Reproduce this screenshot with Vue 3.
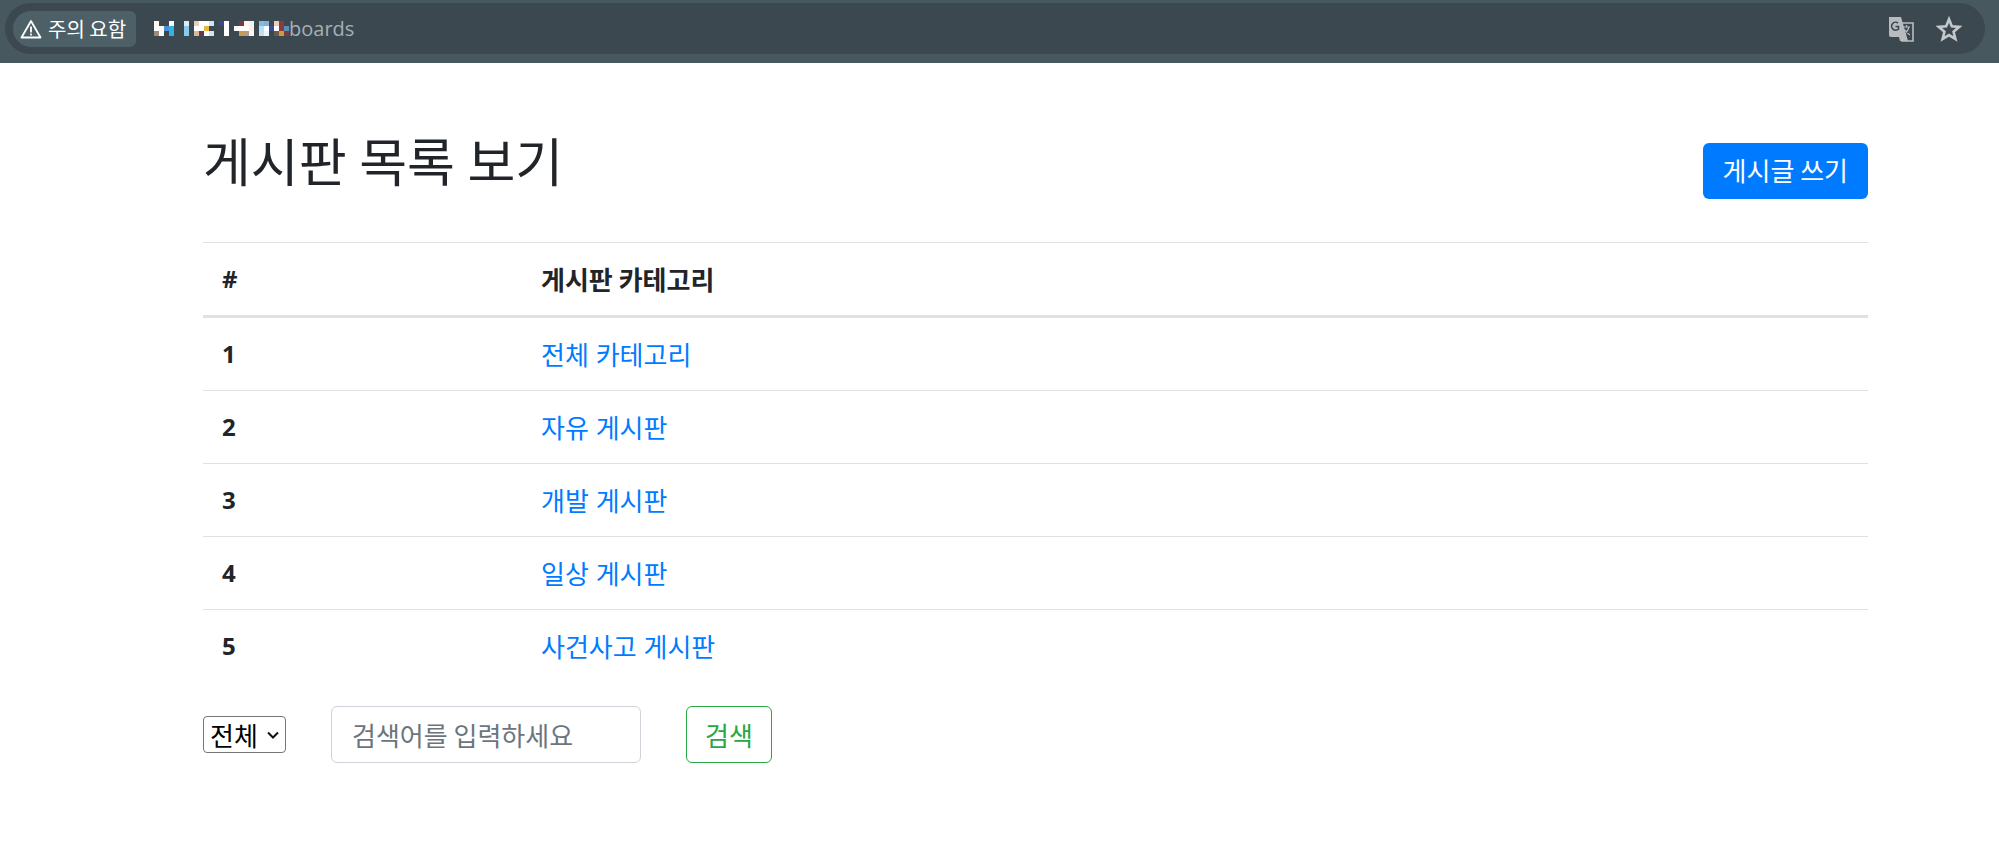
<script setup>
const rows = [
  { id: 1, name: '전체 카테고리' },
  { id: 2, name: '자유 게시판' },
  { id: 3, name: '개발 게시판' },
  { id: 4, name: '일상 게시판' },
  { id: 5, name: '사건사고 게시판' },
]

// pixelated part of the address: [col, row, colour]
const cells = [
  [0, 0, '#fdfbe5'], [0, 1, '#ffffff'], [0, 2, '#a08a7c'], [1, 1, '#fff6ec'], [1, 2, '#ffffff'],
  [2, 1, '#4a90d9'], [3, 0, '#ffffff'], [3, 1, '#35b0e0'], [3, 2, '#35b0e0'],
  [6, 0, '#dfeaf5'], [6, 1, '#8ac8ee'], [6, 2, '#8ac8ee'],
  [8, 0, '#e8cdb8'], [8, 1, '#ffffff'], [8, 2, '#d8b898'], [9, 0, '#ffffff'], [9, 1, '#ffffff'], [9, 2, '#6a3a44'],
  [10, 0, '#ffffff'], [10, 1, '#e8b840'], [10, 2, '#ffffff'], [11, 0, '#c8e8f8'], [11, 2, '#c8e8f8'],
  [13, 0, '#3a4a90'], [14, 0, '#ffffff'], [14, 1, '#ffffff'], [14, 2, '#ffffff'],
  [16, 1, '#ffffff'], [17, 0, '#7a3a40'], [17, 1, '#ffffff'], [17, 2, '#d09a48'],
  [18, 0, '#fff6ec'], [18, 1, '#ffffff'], [18, 2, '#b89a80'], [19, 0, '#e8f4fc'], [19, 1, '#fdf0e0'], [19, 2, '#fdf6ee'],
  [21, 0, '#8ab8e0'], [21, 1, '#aee0ff'], [21, 2, '#c8e0d8'], [22, 0, '#7fb2da'], [22, 1, '#ffffff'], [22, 2, '#e8f4fc'],
  [23, 1, '#3a4a9a'], [24, 0, '#e8cdb8'], [24, 1, '#ffffff'], [24, 2, '#6a5a50'],
  [25, 0, '#8a3a40'], [25, 1, '#8a3a40'], [25, 2, '#d09a40'], [26, 1, '#5a90b0'], [26, 2, '#7a3a40'],
]
</script>

<template>
  <div class="page">
    <header class="chrome">
      <div class="omnibox">
        <div class="warning">
          <svg class="warn-icon" viewBox="0 0 22 20" width="22" height="20">
            <path d="M11 2 L20.5 18.5 H1.5 Z" fill="none" stroke="#fff" stroke-width="1.8" stroke-linejoin="round" />
            <rect x="10.1" y="7.5" width="1.8" height="6" fill="#fff" />
            <rect x="10.1" y="14.6" width="1.8" height="1.8" fill="#fff" />
          </svg>
          <span>주의 요함</span>
        </div>
        <svg class="blur" viewBox="0 0 135 15" width="135" height="15" shape-rendering="crispEdges">
          <rect v-for="(c, i) in cells" :key="i" :x="c[0] * 5" :y="c[1] * 5" width="5" height="5" :fill="c[2]" />
        </svg>
        <span class="path">boards</span>
        <div class="omni-actions">
          <svg viewBox="0 0 26 26" width="26" height="26">
            <path d="M1 1 H13 L20 25 H12 L11 21 H3 Q1 21 1 19 Z" fill="#b8bcbf" />
            <path d="M12 7 H25 V25 H14 Z" fill="none" stroke="#b8bcbf" stroke-width="1.6" />
            <path d="M10 7 A4 4 0 1 0 10.5 13 V10.5 H7.5" fill="none" stroke="#3c4850" stroke-width="1.6" />
            <path d="M15 11 H22 M18.5 9 V11 M21 11 Q19 17 15 19 M16.5 13.5 Q18.5 17 22 19" fill="none" stroke="#b8bcbf" stroke-width="1.2" />
          </svg>
          <svg viewBox="0 0 24 24" width="26" height="26">
            <path d="M12 3 L14.6 9.4 L21.5 10 L16.2 14.5 L17.9 21.2 L12 17.6 L6.1 21.2 L7.8 14.5 L2.5 10 L9.4 9.4 Z" fill="none" stroke="#c4c8ca" stroke-width="2.4" stroke-linejoin="miter" />
          </svg>
        </div>
      </div>
    </header>

    <main class="content">
      <div class="title-row">
        <h1>게시판 목록 보기</h1>
        <a class="btn-write" href="#">게시글 쓰기</a>
      </div>

      <table class="table">
        <thead>
          <tr>
            <th class="col-id">#</th>
            <th>게시판 카테고리</th>
          </tr>
        </thead>
        <tbody>
          <tr v-for="row in rows" :key="row.id">
            <th class="cell-id">{{ row.id }}</th>
            <td><a href="#">{{ row.name }}</a></td>
          </tr>
        </tbody>
      </table>

      <form class="search" @submit.prevent>
        <select class="search-type">
          <option>전체</option>
        </select>
        <input class="search-input" type="text" placeholder="검색어를 입력하세요" />
        <button class="btn-search" type="submit">검색</button>
      </form>
    </main>
  </div>
</template>

<style>
html, body {
  background: #fff;
}
</style>

<style scoped>
.page {
  font-family: "Noto Sans CJK KR", "Liberation Sans", sans-serif;
  color: #212529;
  font-size: 26px;
  height: 844px;
  overflow: hidden;
}

.chrome {
  height: 63px;
  background: #47585f;
  padding: 3px 0 9px;
  box-sizing: border-box;
}

.omnibox {
  height: 51px;
  margin-left: 5px;
  width: 1980px;
  border-radius: 26px;
  background: #3c4850;
  display: flex;
  align-items: center;
  padding-left: 8px;
  box-sizing: border-box;
}

.warning {
  display: flex;
  align-items: center;
  gap: 6px;
  height: 36px;
  width: 123px;
  padding-left: 7px;
  box-sizing: border-box;
  background: #4d6068;
  border-radius: 18px 6px 6px 18px;
  color: #fff;
  font-size: 20px;
  flex: none;
}

.warn-icon {
  flex: none;
}

.blur {
  margin-left: 18px;
  flex: none;
}

.path {
  font-family: "Open Sans", Roboto, sans-serif;
  font-size: 20px;
  color: #a7afb4;
}

.omni-actions {
  margin-left: auto;
  margin-right: 23px;
  display: flex;
  align-items: center;
  gap: 22px;
}

.content {
  margin-left: 203px;
  width: 1665px;
}

.title-row {
  display: flex;
  justify-content: space-between;
  align-items: flex-start;
  padding-top: 67px;
  height: 179px;
  box-sizing: border-box;
}

h1 {
  margin: 0;
  font-size: 52px;
  font-weight: 400;
  line-height: 60px;
  word-spacing: 1px;
}

.btn-write {
  margin-top: 13px;
  height: 56px;
  line-height: 54px;
  padding: 0 20px;
  background: #007bff;
  color: #fff;
  border-radius: 6px;
  text-decoration: none;
  font-size: 26px;
}

.table {
  width: 100%;
  border-collapse: collapse;
}

.table th,
.table td {
  text-align: left;
  font-size: 26px;
  padding: 0 20px;
  height: 72px;
  line-height: 30px;
  border-top: 1px solid #dee2e6;
}

.table th {
  font-weight: 700;
}

.col-id {
  width: 279px;
}

.table .col-id,
.table .cell-id {
  font-family: "Open Sans", sans-serif;
  font-size: 24px;
  padding-left: 19px;
}

.table thead th {
  border-bottom: 3px solid #dee2e6;
}

.table a {
  color: #007bff;
  text-decoration: none;
  word-spacing: 1px;
}

.search {
  display: flex;
  align-items: center;
  margin-top: 24px;
}

.search-type {
  width: 83px;
  height: 37px;
  font-family: inherit;
  font-size: 26px;
  line-height: 35px;
  padding: 0 20px 0 6px;
  box-sizing: border-box;
  appearance: none;
  background: #fff url("data:image/svg+xml,%3Csvg xmlns='http://www.w3.org/2000/svg' width='12' height='8'%3E%3Cpath d='M1 1.5 L6 6.5 L11 1.5' fill='none' stroke='%23111' stroke-width='2'/%3E%3C/svg%3E") no-repeat right 6px center;
  color: #000;
  border: 1px solid #767676;
  border-radius: 4px;
}

.search-input {
  margin-left: 45px;
  width: 310px;
  height: 57px;
  padding: 0 20px;
  box-sizing: border-box;
  border: 1px solid #ced4da;
  border-radius: 6px;
  font-family: inherit;
  font-size: 26px;
}

.search-input::placeholder {
  color: #6c757d;
}

.btn-search {
  margin-left: 45px;
  width: 86px;
  height: 57px;
  background: #fff;
  border: 1px solid #28a745;
  border-radius: 6px;
  color: #28a745;
  font-family: inherit;
  font-size: 26px;
  padding: 0;
}
</style>
